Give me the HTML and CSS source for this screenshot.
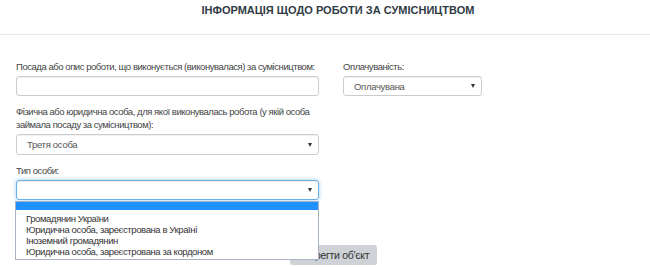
FILE: index.html
```html
<!DOCTYPE html>
<html>
<head>
  <meta charset="utf-8">
  <title>Сумісництво</title>
  <link rel="stylesheet" href="styles.css">
</head>
<body>
  <div class="page-header">
    <h1 class="page-title">ІНФОРМАЦІЯ ЩОДО РОБОТИ ЗА СУМІСНИЦТВОМ</h1>
  </div>
  <div class="form">
    <div class="form-row">
      <div class="col-main">
        <div class="field">
          <label class="field-label single">Посада або опис роботи, що виконується (виконувалася) за сумісництвом:</label>
          <div class="control"></div>
        </div>
        <div class="field">
          <label class="field-label">Фізична або юридична особа, для якої виконувалась робота (у якій особа займала посаду за сумісництвом):</label>
          <div class="control select tall">
            <span class="select-value">Третя особа</span>
            <span class="caret"></span>
          </div>
        </div>
        <div class="field last">
          <label class="field-label">Тип особи:</label>
          <div class="control select focused">
            <span class="select-value"></span>
            <span class="caret"></span>
          </div>
          <ul class="options">
            <li class="option selected"></li>
            <li class="option">Громадянин України</li>
            <li class="option">Юридична особа, зареєстрована в Україні</li>
            <li class="option">Іноземний громадянин</li>
            <li class="option">Юридична особа, зареєстрована за кордоном</li>
          </ul>
        </div>
      </div>
      <div class="col-side">
        <div class="field">
          <label class="field-label">Оплачуваність:</label>
          <div class="control select">
            <span class="select-value">Оплачувана</span>
            <span class="caret"></span>
          </div>
        </div>
      </div>
    </div>
    <div class="actions">
      <button class="btn-save">Зберегти об'єкт</button>
    </div>
  </div>
</body>
</html>
```

FILE: styles.css
```css
:root {
  --text: #333;
  --label: #444;
  --border: #ccc;
  --focus: #66afe9;
  --highlight: #1e90ff;
  --rule: #e7e7e7;
}

body {
  margin: 0;
  padding: 0;
  background: #fff;
  color: var(--text);
  font-family: 'Liberation Sans', Arial, sans-serif;
  font-size: 9.5px;
  letter-spacing: -0.45px;
}

.page-header {
  height: 35px;
  border-bottom: 1px solid var(--rule);
  box-sizing: border-box;
  padding-left: 26px;
}

.page-title {
  margin: 0;
  padding-top: 3px;
  text-align: center;
  font-size: 11px;
  line-height: 14px;
  font-weight: bold;
  letter-spacing: 0;
  color: #2f3b45;
}

.form {
  padding: 25px 16px 0 16px;
}

.form-row {
  display: flex;
  gap: 24px;
}

.col-main {
  width: 303px;
}

.col-side {
  width: 139px;
}

.field {
  margin-bottom: 9px;
  position: relative;
}

.field.last {
  margin-bottom: 0;
}

.field-label {
  display: block;
  line-height: 13px;
  margin-bottom: 3px;
  color: var(--label);
}

.field-label.single {
  white-space: nowrap;
}

.control {
  height: 20px;
  border: 1px solid var(--border);
  border-radius: 3px;
  box-sizing: border-box;
  box-shadow: inset 0 1px 1px rgba(0, 0, 0, 0.06);
  background: #fff;
}

.control.tall {
  height: 21px;
}

.select {
  display: flex;
  align-items: center;
  padding: 0 6px 0 10px;
  color: #555;
  letter-spacing: -0.3px;
}

.select-value {
  flex: 1;
}

.caret {
  width: 0;
  height: 0;
  border-left: 2.5px solid transparent;
  border-right: 2.5px solid transparent;
  border-top: 4px solid #333;
}

.control.focused {
  border-color: var(--focus);
  box-shadow: inset 0 1px 1px rgba(0, 0, 0, 0.075), 0 0 4px rgba(102, 175, 233, 0.6);
}

.options {
  position: absolute;
  left: -1px;
  top: 37px;
  width: 304px;
  margin: 0;
  padding: 0 0 2px 0;
  list-style: none;
  background: #fff;
  border: 1px solid #a9b4c2;
  box-sizing: border-box;
  z-index: 10;
  letter-spacing: -0.4px;
}

.option {
  height: 11px;
  line-height: 11px;
  padding-left: 10px;
  color: var(--text);
  white-space: nowrap;
}

.option.selected {
  height: 8px;
  margin-bottom: 3px;
  background: var(--highlight);
}

.actions {
  display: flex;
  justify-content: center;
  padding-left: 17px;
  margin-top: 45px;
}

.btn-save {
  height: 20px;
  padding: 0 8px;
  border: none;
  border-radius: 3px;
  background: #cfd3d7;
  color: var(--text);
  font-family: inherit;
  font-size: 10.5px;
  letter-spacing: -0.3px;
}
```
